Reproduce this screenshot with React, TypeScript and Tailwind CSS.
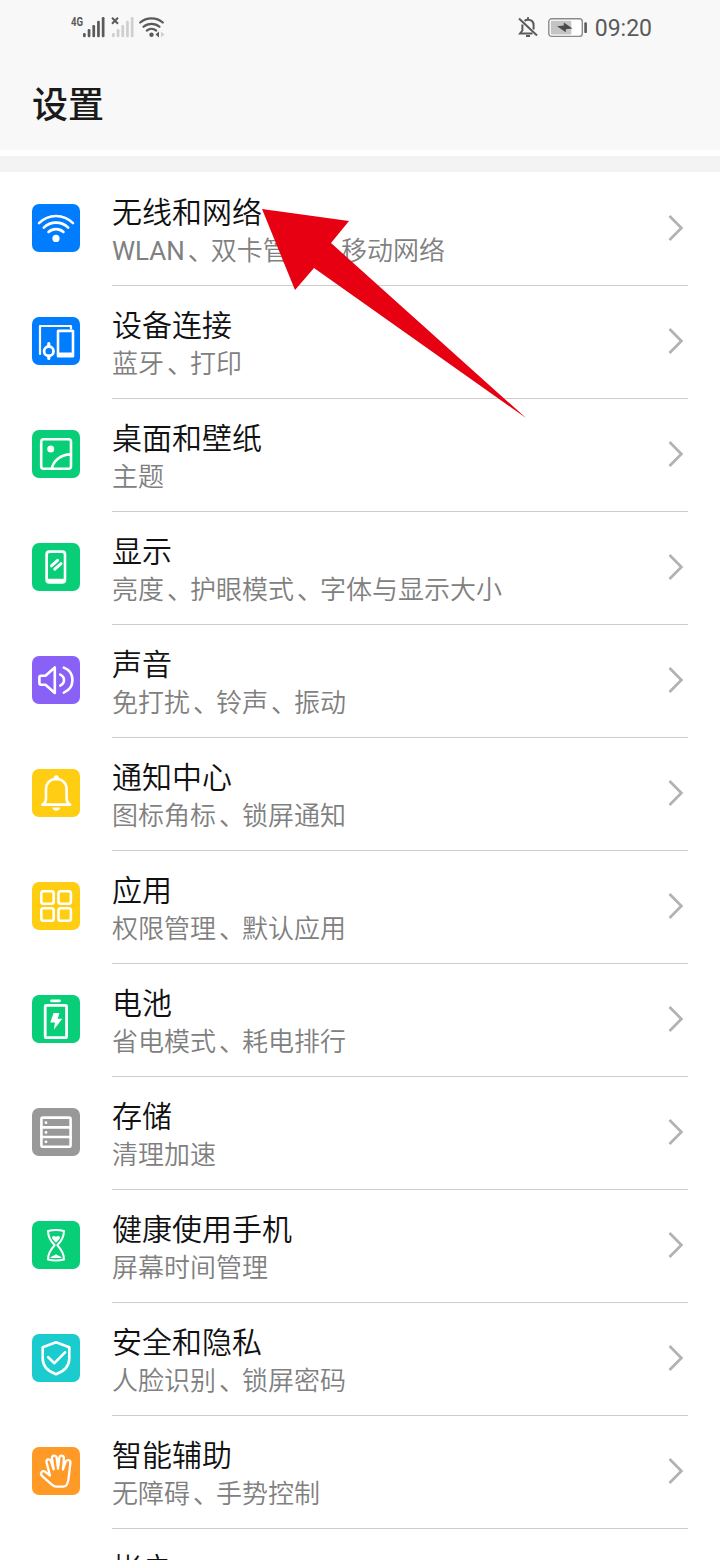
import type { ReactNode } from "react";

type Item = {
  title: string;
  desc: string;
  color: string;
  icon: ReactNode;
};

const items: Item[] = [
  {
    title: "无线和网络",
    desc: "WLAN、双卡管理、移动网络",
    color: "bg-[#007dff]",
    icon: (
      <>
        <path d="M7 19.2C16.5 9.6 31.5 9.6 41 19.2" />
        <path d="M11.8 23.6C18.5 17 29.5 17 36.2 23.6" />
        <path d="M16.5 28C20.8 24.2 27.2 24.2 31.5 28" />
        <circle cx="24" cy="34.4" r="3.6" fill="#fff" stroke="none" />
      </>
    ),
  },
  {
    title: "设备连接",
    desc: "蓝牙、打印",
    color: "bg-[#007dff]",
    icon: (
      <>
        <path d="M8 37V9h31v2.5" strokeWidth="2.2" />
        <path
          d="M26.2 12.4h14.6a1.5 1.5 0 0 1 1.5 1.5v25a1.5 1.5 0 0 1-1.5 1.5H26.2a1.5 1.5 0 0 1-1.5-1.5v-25a1.5 1.5 0 0 1 1.5-1.5zM27.3 15.2v20.4h12.4V15.2z"
          fill="#fff"
          fillRule="evenodd"
          stroke="none"
        />
        <circle cx="16.8" cy="34.2" r="4.7" strokeWidth="2.8" />
        <path d="M16.8 26.5v3M16.8 39v2.5" strokeWidth="3.2" />
      </>
    ),
  },
  {
    title: "桌面和壁纸",
    desc: "主题",
    color: "bg-[#07ce77]",
    icon: (
      <>
        <rect x="9.2" y="9.2" width="29.8" height="29.6" rx="2.5" />
        <path d="M19.8 38.5C21.5 30.5 29 24.6 38.5 24.4" />
        <circle cx="18.7" cy="19" r="3.5" fill="#fff" stroke="none" />
      </>
    ),
  },
  {
    title: "显示",
    desc: "亮度、护眼模式、字体与显示大小",
    color: "bg-[#07ce77]",
    icon: (
      <>
        <path
          d="M17.3 7.3h13a4 4 0 0 1 4 4v25.5a4 4 0 0 1-4 4h-13a4 4 0 0 1-4-4V11.3a4 4 0 0 1 4-4zM17.5 10a1.5 1.5 0 0 0-1.5 1.5v24.2h15.7V11.5a1.5 1.5 0 0 0-1.5-1.5z"
          fill="#fff"
          fillRule="evenodd"
          stroke="none"
        />
        <path d="M19.4 22.8L25.6 17.3M22.8 26.2L29 20.7" strokeWidth="3" />
      </>
    ),
  },
  {
    title: "声音",
    desc: "免打扰、铃声、振动",
    color: "bg-[#8a61f7]",
    icon: (
      <>
        <path d="M9 19.7h4.5L22.8 11.5v25.5L13.5 28.7H9a1.6 1.6 0 0 1-1.6-1.6v-5.8A1.6 1.6 0 0 1 9 19.7z" />
        <path d="M28.2 18.6C33.3 20.8 33.3 27.4 28.2 29.6" />
        <path d="M31.8 11.6C43.3 16 43.3 32.2 31.8 36.6" />
      </>
    ),
  },
  {
    title: "通知中心",
    desc: "图标角标、锁屏通知",
    color: "bg-[#ffcd12]",
    icon: (
      <>
        <path d="M10.3 35.6C13 34.5 14 32 14 29V20.5C14 14 18.2 10 24.3 10S34.6 14 34.6 20.5V29C34.6 32 35.6 34.5 38.3 35.6z" />
        <circle cx="24.3" cy="8.8" r="2.6" fill="#fff" stroke="none" />
        <path d="M20.3 38.6h8C27.5 42.8 21.1 42.8 20.3 38.6z" fill="#fff" stroke="none" />
      </>
    ),
  },
  {
    title: "应用",
    desc: "权限管理、默认应用",
    color: "bg-[#ffcd12]",
    icon: (
      <>
        <rect x="9.3" y="9.3" width="12.4" height="12.4" rx="2.2" />
        <rect x="26.5" y="9.3" width="12.4" height="12.4" rx="2.2" />
        <rect x="9.3" y="26.3" width="12.4" height="12.4" rx="2.2" />
        <rect x="26.5" y="26.3" width="12.4" height="12.4" rx="2.2" />
      </>
    ),
  },
  {
    title: "电池",
    desc: "省电模式、耗电排行",
    color: "bg-[#07ce77]",
    icon: (
      <>
        <path d="M19.5 5.8h8" strokeWidth="2.8" />
        <rect x="13.2" y="10.4" width="21.4" height="32.3" rx="1" strokeWidth="2.8" />
        <path
          d="M21.5 18h6l-1.8 5.8h4.6L21.8 34.8l1.1-7.3h-4.6z"
          fill="#fff"
          stroke="none"
        />
      </>
    ),
  },
  {
    title: "存储",
    desc: "清理加速",
    color: "bg-[#999999]",
    icon: (
      <>
        <rect x="9.4" y="9.6" width="29.2" height="29.2" rx="1.5" />
        <path d="M9.4 19.4h29.2M9.4 29h29.2" />
        <circle cx="14" cy="14.7" r="1.4" fill="#fff" stroke="none" />
        <circle cx="14" cy="24.4" r="1.4" fill="#fff" stroke="none" />
        <circle cx="14" cy="33.8" r="1.4" fill="#fff" stroke="none" />
      </>
    ),
  },
  {
    title: "健康使用手机",
    desc: "屏幕时间管理",
    color: "bg-[#07ce77]",
    icon: (
      <>
        <path
          d="M16 10C21 8.6 27 8.6 32 10C32 17 28.5 21 25.3 24.2C28.5 27.5 32 31.5 32 38.5C27 39.6 21 39.6 16 38.5C16 31.5 19.5 27.5 22.7 24.2C19.5 21 16 17 16 10z"
          strokeWidth="2"
        />
        <path
          d="M24 21.8l-3.8-4.2c-1.1-1.9 1.8-3.9 3.8-1.7c2-2.2 4.9-.2 3.8 1.7zM18 37C19.5 35 22 35 24 33.2C26 35 28.5 35 30 37z"
          fill="#fff"
          stroke="none"
        />
      </>
    ),
  },
  {
    title: "安全和隐私",
    desc: "人脸识别、锁屏密码",
    color: "bg-[#1accce]",
    icon: (
      <>
        <path d="M24 8.2L37.3 13.2V24.5C37.3 32.5 31.5 37.5 24 40.3C16.5 37.5 10.7 32.5 10.7 24.5V13.2z" />
        <path d="M16.2 23.2l6.2 6L33 18.3" />
      </>
    ),
  },
  {
    title: "智能辅助",
    desc: "无障碍、手势控制",
    color: "bg-[#ff9a27]",
    icon: (
      <path
        d="M18 28.5L14.6 15.6C13.8 12 17.8 11.2 18.9 14.2L21.7 22.3L20 11.8C19.4 8.2 24.1 7.4 24.7 11L26 21.5L27.3 11C27.7 7.6 32.2 8.1 31.9 11.5L31 22.5L33.6 14.9C34.6 11.9 38.8 12.8 38.4 16L36.4 32.5C35.6 37.5 34.5 39.6 31 39.6H24.5C22.5 39.6 21 38.6 19.5 37.3L10 28.8C7.5 26.3 10.3 22.8 13.2 24.8z"
        strokeWidth="2.3"
      />
    ),
  },
  { title: "帐户", desc: "", color: "", icon: null },
];

// Signal strength bars, left edge of each bar and its top
const bars = [
  [0, 16],
  [4.7, 12],
  [9.4, 8],
  [14.1, 3.8],
  [18.8, 0],
];

function Signal({ className }: { className: string }) {
  return (
    <svg width="22" height="21" viewBox="0 0 22 21" className={className}>
      {bars.map(([x, y]) => (
        <rect key={x} x={x} y={y} width="2.7" height={20.3 - y} rx="1.2" fill="currentColor" />
      ))}
    </svg>
  );
}

function StatusBar() {
  return (
    <div className="flex h-14 items-start justify-between pl-[71px] pr-[68px] pt-[17px] text-[#5a5a5a]">
      <div className="flex items-start">
        <span className="w-[12px] origin-left scale-x-[0.8] text-[12px] font-bold leading-[10px]">4G</span>
        <Signal className="text-[#5a5a5a]" />
        <svg width="8" height="8" viewBox="0 0 8 8" className="ml-[6px]">
          <path d="M1 .8l6 6M7 .8l-6 6" stroke="currentColor" strokeWidth="2" />
        </svg>
        <Signal className="-ml-[7px] text-[#cfcfcf]" />
        <svg width="26" height="21" viewBox="0 0 26 21" className="ml-[5px]" fill="none">
          <g stroke="currentColor" strokeWidth="2.2" strokeLinecap="round">
            <path d="M1.2 5.5C7.5-.1 17.5-.1 23.8 5.5" />
            <path d="M4.5 9.8C9 5.8 16 5.8 20.5 9.8" />
            <path d="M7.8 13.6C10.5 11.2 14.5 11.2 17.2 13.6" />
          </g>
          <circle cx="12.5" cy="17.7" r="2.2" fill="currentColor" />
          <path d="M20 14.5v6l-3.5-3z" fill="currentColor" />
          <path d="M22 14.5v6l3.5-3z" fill="#cfcfcf" />
        </svg>
      </div>
      <div className="flex items-start">
        <svg
          width="20"
          height="21"
          viewBox="0 0 20 21"
          fill="none"
          stroke="currentColor"
          strokeWidth="2"
        >
          <path d="M1 1.5l18 17" />
          <path d="M6.5 3.8C7.4 3.2 8.5 2.8 10 2.8C13.5 2.8 15.6 5 15.6 8.5V12.5M4.4 7.5V13.5L2 16.5H14.5" />
          <path d="M10 .3v2M8 19h4" />
        </svg>
        <svg width="40" height="20" viewBox="0 0 40 20" className="ml-[10px] mt-px">
          <rect x=".8" y=".8" width="33.5" height="17.6" rx="3" fill="#fff" stroke="#8a8a8a" strokeWidth="1.4" />
          <rect x="2.8" y="2.8" width="20.5" height="13.6" rx="1" fill="#c4c4c4" />
          <rect x="36.3" y="4.3" width="2.6" height="10.8" rx="1.2" fill="currentColor" />
          <path d="M9 8.2L15.8 7.6V4.6L24.5 10.5L17.8 11.2V14.2z" fill="#4a4a4a" />
        </svg>
        <span className="ml-[7px] text-[23px] leading-[24px]">09:20</span>
      </div>
    </div>
  );
}

function Row({ title, desc, color, icon }: Item) {
  return (
    <div className="flex h-[113px] shrink-0 px-8">
      <div className={`mt-[31px] size-12 shrink-0 rounded-[7px] ${color}`}>
        <svg
          viewBox="0 0 48 48"
          className="size-12"
          fill="none"
          stroke="#fff"
          strokeWidth="2.6"
          strokeLinecap="round"
          strokeLinejoin="round"
        >
          {icon}
        </svg>
      </div>
      <div className="ml-8 flex grow justify-between border-b border-[#cccccc]">
        <div className="pt-[21px]">
          <div className="text-[30px] font-[350] leading-[38px] text-[#111111]">{title}</div>
          <div className="text-[26px] font-[350] leading-[38px] text-[#808080]">
            {desc.split("、").map((part, i) => (
              <span key={part} className={part === "WLAN" ? "font-normal" : ""}>
                {i > 0 && <span className="relative left-[3px]">、</span>}
                {part}
              </span>
            ))}
          </div>
        </div>
        <svg width="16" height="28" viewBox="0 0 16 28" className="mr-[4px] mt-[41px]" fill="none">
          <path d="M1.5 2L13.4 14L1.5 26" stroke="#b2b2b2" strokeWidth="2.7" />
        </svg>
      </div>
    </div>
  );
}

export default function App() {
  return (
    <div className="relative flex h-[1560px] w-[720px] flex-col overflow-hidden bg-white font-[Roboto,'Noto_Sans_CJK_SC',sans-serif]">
      <header className="h-[150px] shrink-0 bg-[#f8f8f8]">
        <StatusBar />
        <h1 className="pl-8 pt-6 text-[36px] font-medium leading-[52px] text-[#1a1a1a]">设置</h1>
      </header>
      <div className="mb-px mt-[6px] h-4 shrink-0 bg-[#f3f3f3]" />
      {items.map((item) => (
        <Row key={item.title} {...item} />
      ))}

      {/* pointer over the first entry */}
      <svg width="266" height="212" viewBox="0 0 266 212" className="absolute left-[262px] top-[208px]">
        <path d="M0 1L87 13L69 35L264 210L52 60L33 82z" fill="#e60012" />
      </svg>
    </div>
  );
}
